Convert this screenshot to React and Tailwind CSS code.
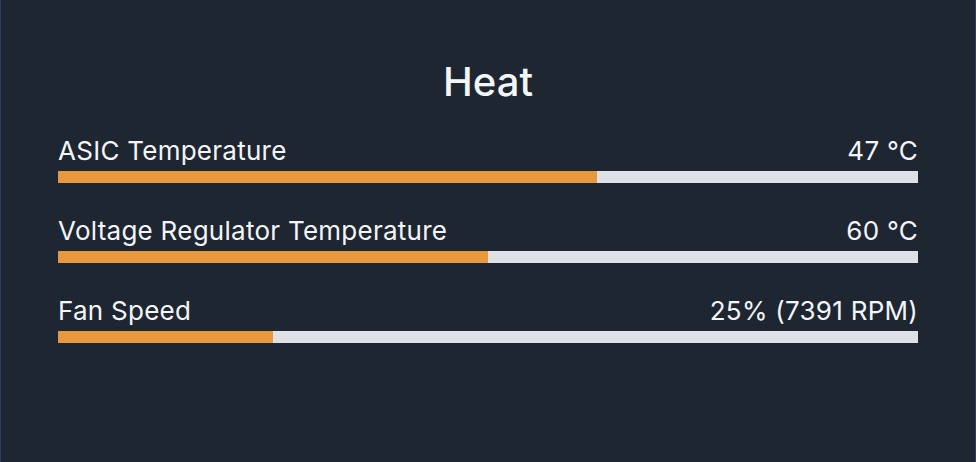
import React from "react";

const rows = [
  { label: "ASIC Temperature", value: "47 °C", pct: 62.7 },
  { label: "Voltage Regulator Temperature", value: "60 °C", pct: 50 },
  { label: "Fan Speed", value: "25% (7391 RPM)", pct: 25 },
];

function Meter({ label, value, pct }) {
  return (
    <div className="flex flex-col">
      <div className="flex items-end justify-between text-[26px] leading-[30px] tracking-[0.01em] text-[#f4f5f7]">
        <span>{label}</span>
        <span>{value}</span>
      </div>
      <div className="mt-[5px] h-3 w-full bg-[#dee2e6]">
        <div className="h-full bg-[#e8993d]" style={{ width: `${pct}%` }} />
      </div>
    </div>
  );
}

export default function App() {
  return (
    <div
      className="h-[462px] w-[976px] border-x border-[#2c3d5c] bg-[#1d2631] px-[57px] pt-[58px]"
      style={{ fontFamily: "Inter, 'Noto Sans', sans-serif" }}
    >
      <h2 className="text-center text-[40px] leading-[48px] font-medium text-[#f4f5f7]">Heat</h2>
      <div className="mt-[30px] flex flex-col gap-[33px]">
        {rows.map((r) => (
          <Meter key={r.label} {...r} />
        ))}
      </div>
    </div>
  );
}
